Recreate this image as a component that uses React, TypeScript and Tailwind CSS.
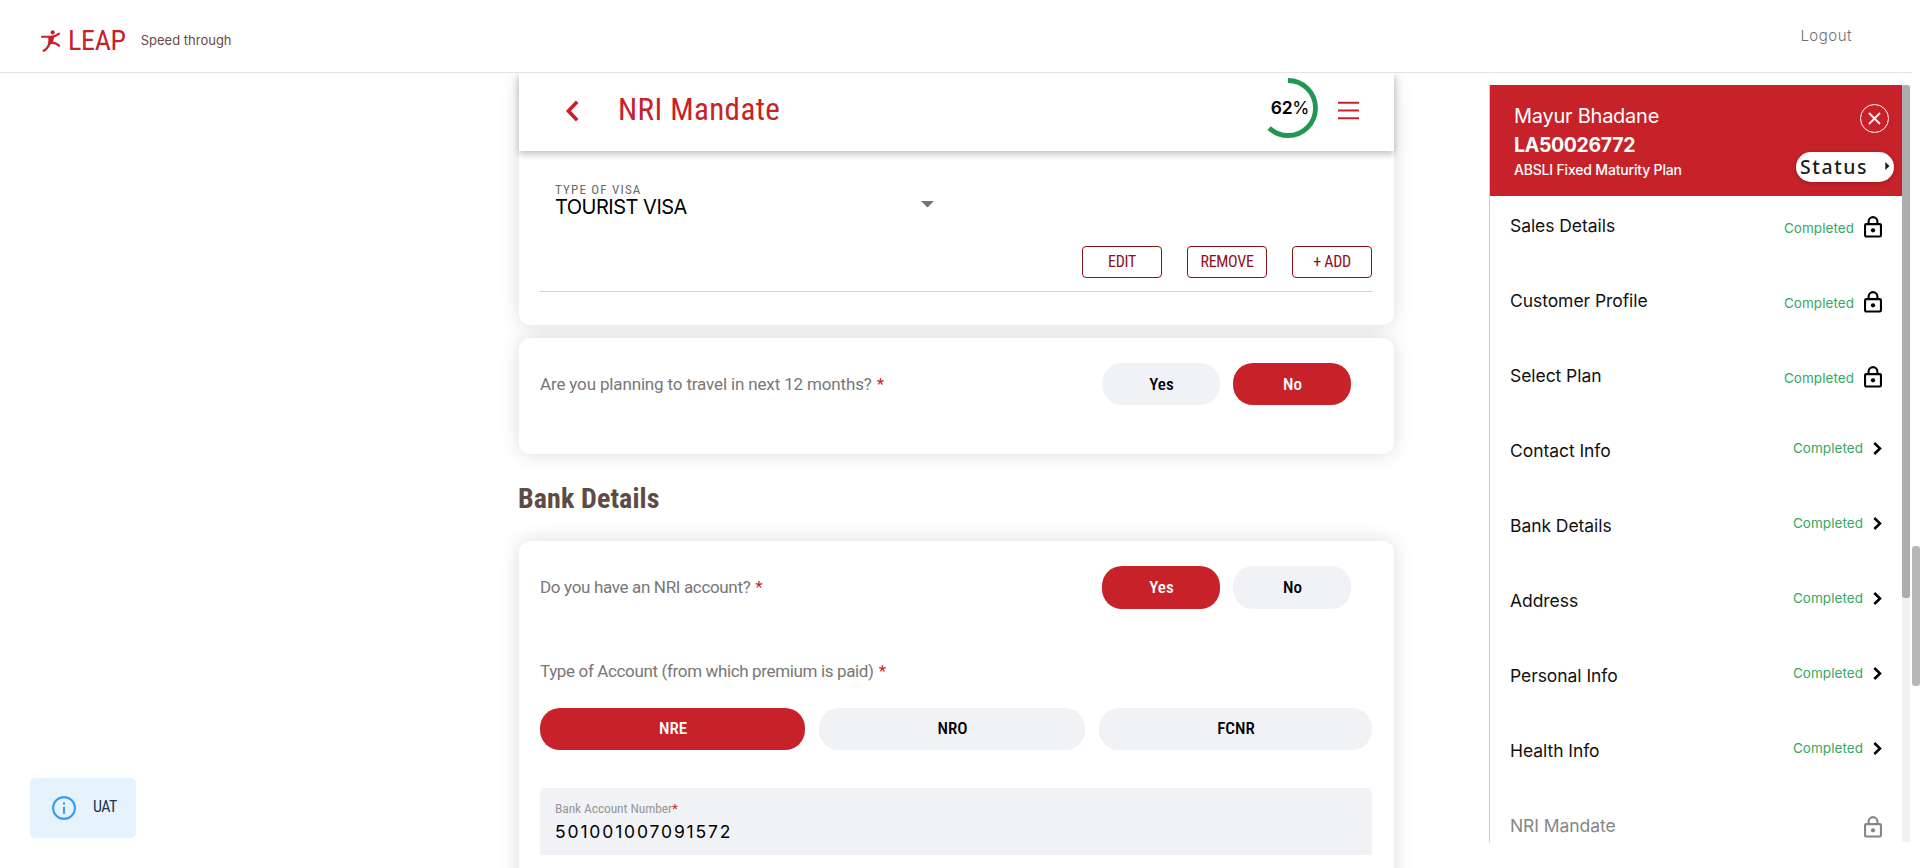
import React from "react";

const DIN = "font-['Roboto_Condensed','Roboto',sans-serif]";
const SANS = "font-['Inter','Liberation_Sans',sans-serif]";

type Step = { label: string; state: "locked" | "open" | "disabled" };

const steps: Step[] = [
  { label: "Sales Details", state: "locked" },
  { label: "Customer Profile", state: "locked" },
  { label: "Select Plan", state: "locked" },
  { label: "Contact Info", state: "open" },
  { label: "Bank Details", state: "open" },
  { label: "Address", state: "open" },
  { label: "Personal Info", state: "open" },
  { label: "Health Info", state: "open" },
  { label: "NRI Mandate", state: "disabled" },
];

function Runner() {
  return (
    <svg width="20" height="22" viewBox="0 0 20 22" fill="none" stroke="#c72229" strokeLinecap="round" strokeLinejoin="round">
      <circle cx="11.7" cy="2.4" r="2.1" fill="#c72229" stroke="none" />
      <path d="M1 6.800h8.500c4-.2 6.500-1.300 8.500-3.200" strokeWidth="2.100" />
      <path d="M8 6.800h4.500l-1.500 6.400-3 1z" fill="#c72229" strokeWidth="1.400" />
      <path d="M8.800 12.500c-1.200 3.900-3 6.600-6 8.200" strokeWidth="2.400" />
      <path d="M10.300 12.600c3.400.2 6 1.200 7.800 3.200" strokeWidth="2.200" />
    </svg>
  );
}

function Lock() {
  return (
    <svg className="mt-px" width="18" height="22" viewBox="0 0 18 22" fill="none" stroke="currentColor" strokeWidth="2.100">
      <rect x="1.050" y="8.100" width="15.900" height="12.400" rx="1.200" />
      <path d="M4.600 8V5.500a4.400 4.400 0 0 1 8.800 0V8" />
      <circle cx="9" cy="14.300" r="2.150" fill="currentColor" stroke="none" />
    </svg>
  );
}

function Pill({ text, active, className }: { text: string; active?: boolean; className: string }) {
  return (
    <button
      className={`${DIN} ${className} flex items-center justify-center rounded-[20px] pl-px text-[17px] font-medium ${
        active ? "bg-[#c72229] text-white" : "bg-[#f1f2f6] text-black"
      }`}
    >
      {text}
    </button>
  );
}

function Question({ text, className }: { text: string; className: string }) {
  return (
    <div className="whitespace-nowrap font-['Roboto',sans-serif] text-[17px] leading-[24px] text-[#777777]">
      <span className={className}>{text}</span>
      <span className="ml-[5px] text-[#d0202e]">*</span>
    </div>
  );
}

const card =
  "relative rounded-xl bg-white before:absolute before:inset-0 before:-z-10 before:rounded-xl before:shadow-[0_0_20px_rgba(0,0,0,0.14)]";

function ActionButton({ text }: { text: string }) {
  return (
    <button className={`${DIN} h-8 w-20 rounded-[4px] border border-[#8c1218] text-[16px] leading-[30px] tracking-[-0.3px] text-[#8c1218]`}>
      {text}
    </button>
  );
}

function FormHeader() {
  return (
    <div className="relative z-10 flex h-[78px] w-full shrink-0 items-start bg-white shadow-[0_3px_7px_rgba(0,0,0,0.26)]">
      <svg className="ml-[46px] mt-[27px]" width="14" height="22" viewBox="0 0 14 22" fill="none" stroke="#c72229" strokeWidth="3.600">
        <path d="M12.200 1.800 3.400 11l8.800 9.200" />
      </svg>
      <h1 className={`${DIN} ml-[39px] mt-[19px] text-[31px] leading-[36px] tracking-[0.4px] text-[#c72229]`}>NRI Mandate</h1>
      <div className="ml-auto mt-[5px] grid size-[60px] place-items-center">
        <svg className="col-start-1 row-start-1" width="60" height="60" viewBox="0 0 60 60" fill="none">
          <circle cx="30" cy="30" r="27.500" stroke="#219653" strokeWidth="4.800" pathLength={100} strokeDasharray="62 38" transform="rotate(-90 30 30)" />
        </svg>
        <span className={`${SANS} col-start-1 row-start-1 pl-1 text-[17.500px] font-semibold leading-none tracking-[-0.3px] text-black`}>
          62<span className="font-normal">%</span>
        </span>
      </div>
      <svg className="ml-[20px] mr-[35px] mt-[28px]" width="21" height="20" viewBox="0 0 21 20" stroke="#c72229" strokeWidth="1.900">
        <path d="M0 1.700h21M0 9.500h21M0 17.300h21" />
      </svg>
    </div>
  );
}

function Sidebar() {
  return (
    <aside className={`${SANS} mt-3 flex h-[757px] w-[421px] shrink-0 overflow-hidden border-l border-[#cfcfd2]`}>
      <div className="flex w-[412px] flex-col">
        <div className="flex h-[111px] shrink-0 justify-between bg-[#c72229] pl-6 pr-2 text-white">
          <div className="pt-4">
            <div className="text-[20px] leading-[30px] tracking-[-0.25px]">Mayur Bhadane</div>
            <div className="text-[19.500px] font-bold leading-[29px] tracking-[-0.35px]">LA50026772</div>
            <div className="text-[14px] font-medium leading-[20px] tracking-[-0.180px]">ABSLI Fixed Maturity Plan</div>
          </div>
          <div className="flex flex-col items-end pt-[19px]">
            <button className="mr-[5px] flex size-[29px] items-center justify-center rounded-full border border-white">
              <svg width="13" height="13" viewBox="0 0 13 13" stroke="white" strokeWidth="1.800">
                <path d="m1 1 11 11M12 1 1 12" />
              </svg>
            </button>
            <button className="mt-[19px] flex h-[30px] w-[98px] items-center justify-between rounded-full bg-white pl-[4px] pr-[4px] text-[#1b1b1b] shadow-[0_1px_4px_rgba(0,0,0,0.25)]">
              <span className="font-['Noto_Sans',sans-serif] text-[19.500px] font-medium leading-none tracking-[1.600px]">Status</span>
              <svg className="-mt-[3px]" width="5" height="8" viewBox="0 0 5 8">
                <path d="M0.300 0v8l4.200-4z" fill="#1b1b1b" />
              </svg>
            </button>
          </div>
        </div>
        <div className="flex flex-col gap-[15px]">
          {steps.map((s) => (
            <div
              key={s.label}
              className={`flex h-[60px] shrink-0 items-center pl-5 pr-5 ${s.state === "disabled" ? "text-[#868686]" : "text-[#111111]"}`}
            >
              <span className="text-[17.500px] leading-[26px] tracking-[-0.060px]">{s.label}</span>
              {s.state === "open" && (
                <span className="mb-[6px] ml-auto flex items-center gap-[10px]">
                  <span className="text-[13.500px] tracking-[0.050px] text-[#35a862]">Completed</span>
                  <svg className="-ml-px" width="10" height="13" viewBox="0 0 10 13" fill="none" stroke="black" strokeWidth="2.500">
                    <path d="m2.300 1 5.700 5.500L2.300 12" />
                  </svg>
                </span>
              )}
              {s.state === "locked" && (
                <span className="ml-auto flex items-center gap-[10px] text-black">
                  <span className="mt-[4px] text-[13.500px] tracking-[0.050px] text-[#35a862]">Completed</span>
                  <Lock />
                </span>
              )}
              {s.state === "disabled" && (
                <span className="ml-auto">
                  <Lock />
                </span>
              )}
            </div>
          ))}
        </div>
      </div>
      <div className="w-2 bg-[#f1f2f6]">
        <div className="h-[513px] rounded-[3px] bg-[#acadb1]" />
      </div>
    </aside>
  );
}

export default function App() {
  return (
    <div className="flex h-[868px] w-full overflow-hidden bg-white">
      <div className="flex min-w-0 flex-1 flex-col">
        <header className="flex h-[73px] shrink-0 items-start border-b border-[#e2e3e6] bg-white pl-[41px]">
          <div className="mt-[30px]">
            <Runner />
          </div>
          <span className={`${DIN} ml-[7px] mt-[24px] text-[28px] leading-[33px] tracking-[-0.3px] text-[#c72229]`}>LEAP</span>
          <span className={`${SANS} ml-[15px] mt-[30px] text-[13px] leading-[20px] text-[#6a4a45]`}>Speed through</span>
          <span className={`${SANS} ml-auto mr-[60px] mt-[26px] text-[15px] font-light leading-[20px] tracking-[0.500px] text-[#6f6f75]`}>
            Logout
          </span>
        </header>

        <main className="flex min-h-0 flex-1 overflow-hidden">
          <div className="flex w-[519px] shrink-0 items-end pb-[30px] pl-[30px]">
            <div className="flex h-[60px] w-[106px] items-center rounded-[5px] bg-[#e6f3fd] pl-[22px]">
              <svg width="24" height="24" viewBox="0 0 24 24" fill="none">
                <circle cx="12" cy="12" r="10.900" stroke="#36a0f4" strokeWidth="2.200" />
                <path d="M12 10.800v7" stroke="#36a0f4" strokeWidth="2.200" />
                <path d="M12 6.300v2.200" stroke="#36a0f4" strokeWidth="2.200" />
              </svg>
              <span className={`${DIN} mb-[2px] ml-[17px] text-[16px] leading-none tracking-[-0.500px] text-[#173753]`}>UAT</span>
            </div>
          </div>

          <section className="isolate flex w-[875px] shrink-0 flex-col">
            <FormHeader />

            <div className={`${card} -mt-[78px] h-[252px] shrink-0 pl-[21px] pr-[22px] pt-[78px]`}>
              <div className="flex h-[95px] pl-[15px] pt-[31px]">
                <div className="w-[366px]">
                  <div className={`${DIN} text-[13px] leading-[16px] tracking-[1.200px] text-[#6b6b6b]`}>TYPE OF VISA</div>
                  <div className={`${SANS} text-[20px] leading-[18px] tracking-[-0.500px] text-black`}>TOURIST VISA</div>
                </div>
                <svg className="mt-[19px]" width="13" height="7" viewBox="0 0 13 7">
                  <path d="M0 0h13L6.500 6.500z" fill="#757575" />
                </svg>
              </div>
              <div className="flex h-[46px] justify-end gap-[25px] border-b border-[#d2d2d2]">
                <ActionButton text="EDIT" />
                <ActionButton text="REMOVE" />
                <ActionButton text="+ ADD" />
              </div>
            </div>

            <div className={`${card} mt-[13px] flex h-[116px] shrink-0 items-start pl-[21px] pr-[43px] pt-[25px]`}>
              <div className="flex-1 pt-[9px]">
                <Question text="Are you planning to travel in next 12 months?" className="tracking-[-0.150px]" />
              </div>
              <div className="flex gap-[13px]">
                <Pill text="Yes" className="h-[42px] w-[118px] pt-px" />
                <Pill text="No" active className="h-[42px] w-[118px] pt-px" />
              </div>
            </div>

            <h2 className={`${DIN} -ml-px mb-[25px] mt-[28px] text-[28px] font-bold leading-[34px] tracking-[0.100px] text-[#5f4b46]`}>Bank Details</h2>

            <div className={`${card} h-[420px] shrink-0 pl-[21px] pr-[22px] pt-[25px]`}>
              <div className="flex items-start pr-[21px]">
                <div className="flex-1 pt-[9px]">
                  <Question text="Do you have an NRI account?" className="tracking-[-0.340px]" />
                </div>
                <div className="flex gap-[13px]">
                  <Pill text="Yes" active className="h-[43px] w-[118px]" />
                  <Pill text="No" className="h-[43px] w-[118px]" />
                </div>
              </div>
              <div className="mt-[50px]">
                <Question text="Type of Account (from which premium is paid)" className="tracking-[-0.360px]" />
              </div>
              <div className="mt-[25px] flex gap-[14px]">
                <Pill text="NRE" active className="h-[42px] w-[265px]" />
                <Pill text="NRO" className="h-[42px] w-[266px]" />
                <Pill text="FCNR" className="h-[42px] w-[273px]" />
              </div>
              <div className="mt-[38px] h-[67px] rounded-t-[4px] bg-[#f1f2f6] pl-[15px] pt-[11px]">
                <div className={`${DIN} text-[13.500px] leading-[18px] tracking-[-0.100px] text-[#979797]`}>
                  Bank Account Number<span className="text-[#d0202e]">*</span>
                </div>
                <div className={`${SANS} mt-px text-[17.500px] leading-[28px] tracking-[1.850px] text-black`}>501001007091572</div>
              </div>
            </div>
          </section>

          <div className="ml-auto mr-[2px]">
            <Sidebar />
          </div>
        </main>
      </div>
      <div className="w-2 shrink-0 pt-[546px]">
        <div className="h-[140px] rounded-[3px] bg-[#b7b7b7]" />
      </div>
    </div>
  );
}
